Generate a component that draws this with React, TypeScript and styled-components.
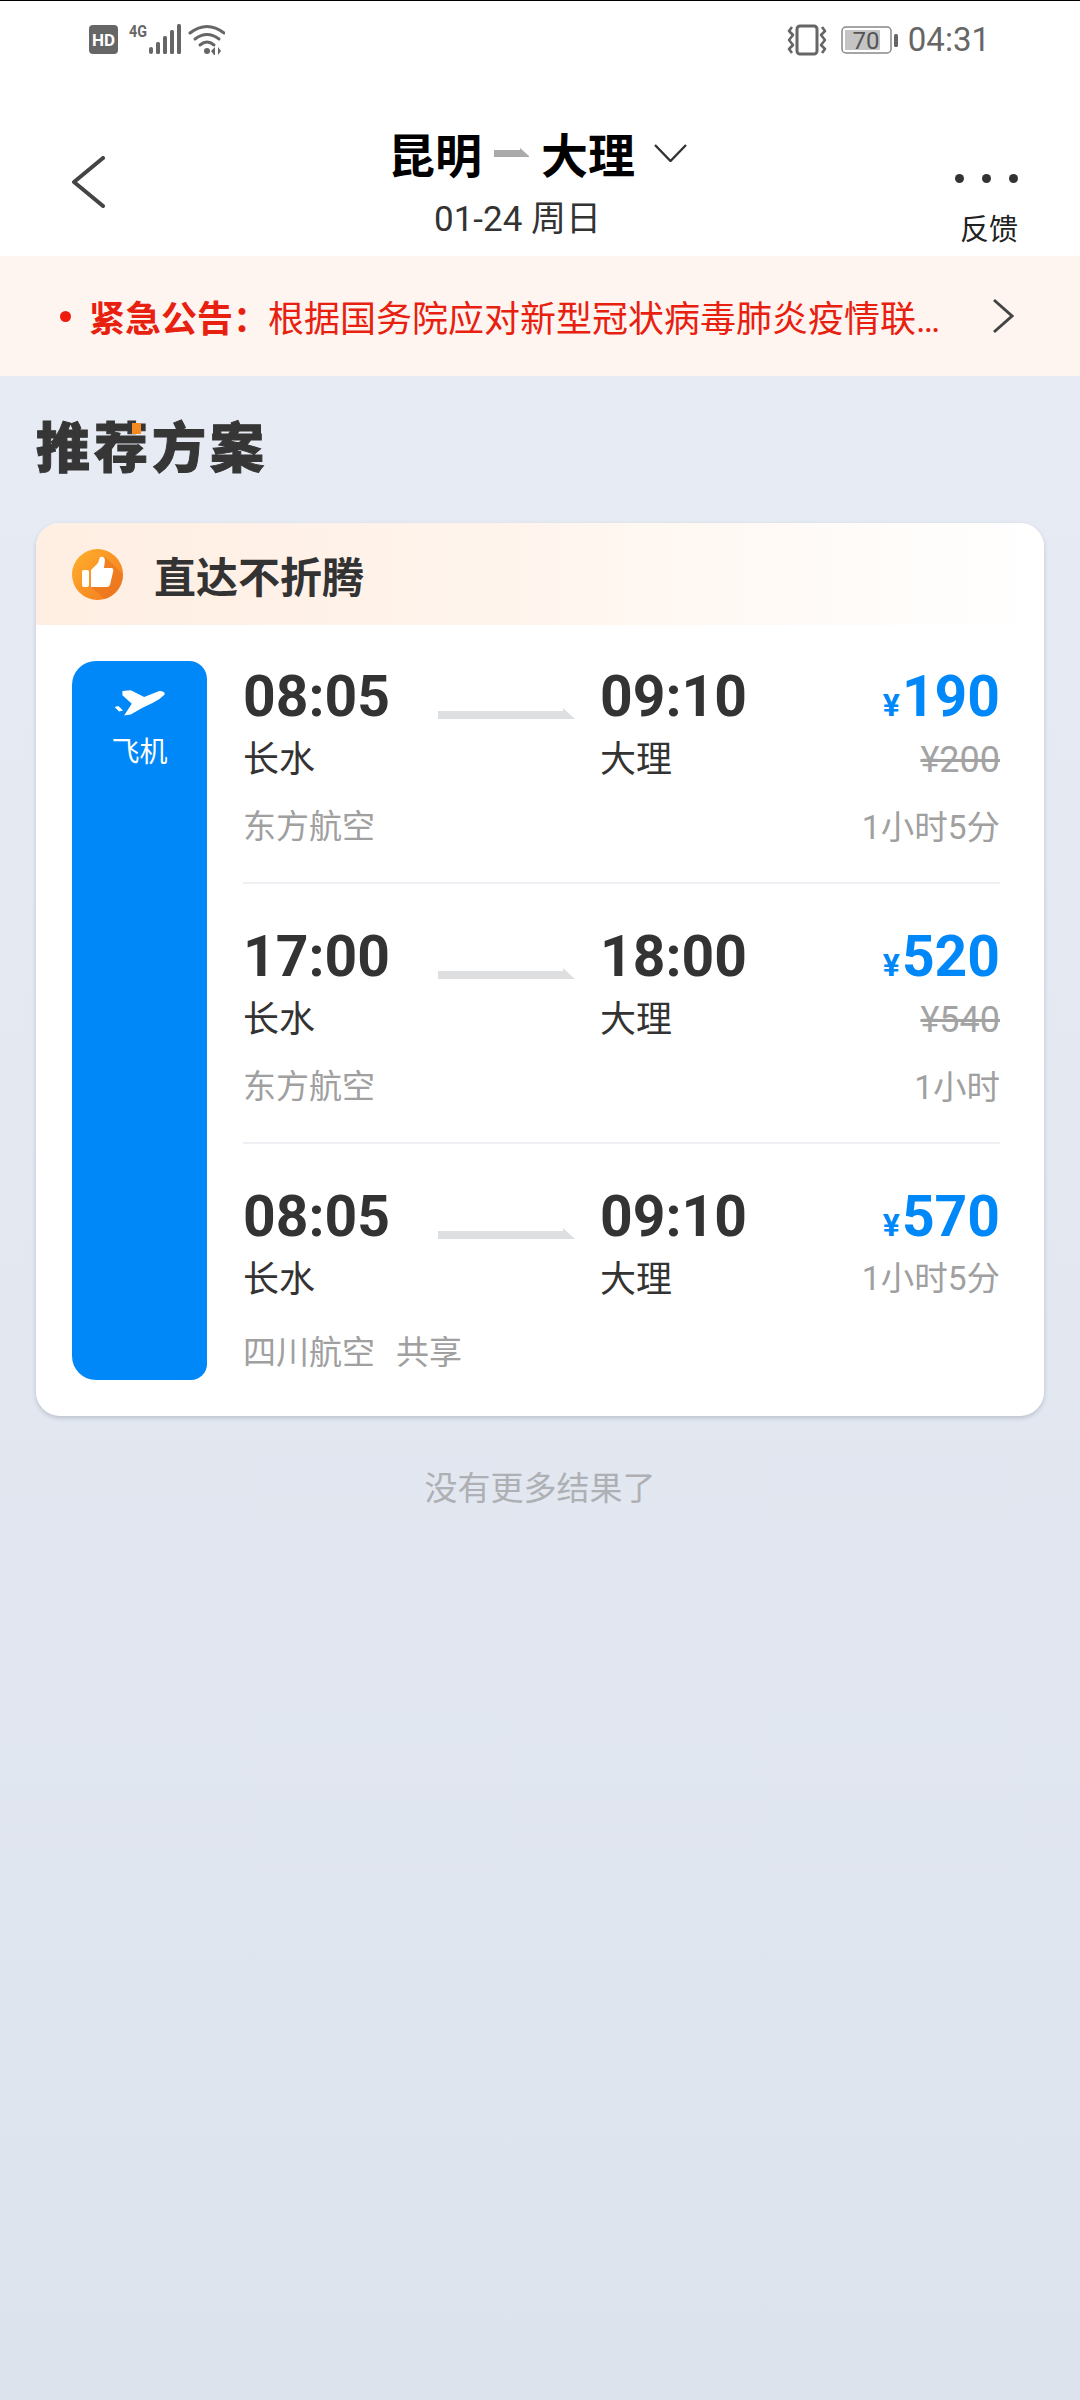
import React from 'react'
import styled, { createGlobalStyle } from 'styled-components'

const GlobalStyle = createGlobalStyle`
  html, body {
    margin: 0;
    padding: 0;
    background: #fff;
  }
  * {
    box-sizing: border-box;
  }
`

const Page = styled.div`
  width: 1080px;
  height: 2400px;
  overflow: hidden;
  display: flex;
  flex-direction: column;
  font-family: Roboto, 'Noto Sans CJK SC', sans-serif;
  background: linear-gradient(180deg, #e9edf5 0%, #dde3ed 100%);
`

const StatusBar = styled.div`
  height: 80px;
  flex: none;
  display: flex;
  align-items: flex-start;
  justify-content: space-between;
  padding: 22px 90px 0 89px;
  background: #fff;
  border-top: 1px solid #000;
`

const StatusGroup = styled.div`
  display: flex;
  align-items: center;
  height: 34px;
`

const Clock = styled.span`
  font-size: 33px;
  line-height: 34px;
  color: #666;
  margin-left: 9px;
`

const Header = styled.header`
  height: 176px;
  flex: none;
  display: flex;
  background: #fff;
`

const BackCol = styled.div`
  width: 120px;
  flex: none;
  padding: 76px 0 0 71px;
`

const CenterCol = styled.div`
  flex: 1;
  display: flex;
  flex-direction: column;
  align-items: center;
  padding-top: 37px;
`

const TitleRow = styled.div`
  position: relative;
  display: flex;
  align-items: center;
  height: 70px;
  gap: 12px;
  margin-right: 9px;
  font-size: 47px;
  font-weight: 700;
  color: #000;
`

const TitleChevron = styled.svg`
  position: absolute;
  left: calc(100% + 19px);
  top: 27px;
`

const DateText = styled.div`
  font-size: 35px;
  line-height: 56px;
  height: 56px;
  margin: 5px 0 0 3px;
  color: #333;
`

const MoreCol = styled.div`
  width: 168px;
  flex: none;
  display: flex;
  flex-direction: column;
  align-items: flex-end;
  padding: 94px 62px 0 0;
`

const Dots = styled.div`
  display: flex;
  gap: 18px;
`

const Dot = styled.span`
  width: 9px;
  height: 9px;
  border-radius: 50%;
  background: #333;
`

const Feedback = styled.div`
  font-size: 29px;
  line-height: 40px;
  margin-top: 27px;
  color: #222;
`

const Notice = styled.div`
  height: 120px;
  flex: none;
  display: flex;
  align-items: center;
  padding-left: 60px;
  background: #fff5f0;
  color: #e8200f;
  font-size: 36px;
`

const NoticeDot = styled.span`
  width: 11px;
  height: 11px;
  flex: none;
  border-radius: 50%;
  background: #ee1c0e;
  margin-right: 18px;
`

const NoticeLabel = styled.span`
  font-weight: 700;
  flex: none;
  width: 179px;
  white-space: nowrap;
`

const NoticeText = styled.span`
  width: 677px;
  flex: none;
  white-space: nowrap;
`

const NoticeArrow = styled.svg`
  margin-left: 47px;
  flex: none;
`

const Section = styled.main`
  padding: 0 36px;
`

const Heading = styled.h2`
  position: relative;
  width: max-content;
  margin: 37px 0 36px 0;
  font-size: 54px;
  line-height: 74px;
  font-weight: 900;
  letter-spacing: 4px;
  color: #363636;
  -webkit-text-stroke: 1px #363636;
`

const HeadingMark = styled.span`
  position: absolute;
  left: 96px;
  top: 10px;
  width: 9px;
  height: 11px;
  background: #f58a1f;
`

const Card = styled.section`
  width: 1008px;
  background: #fff;
  border-radius: 24px;
  overflow: hidden;
  box-shadow: 0 2px 4px rgba(70, 80, 100, 0.25);
`

const CardHeader = styled.div`
  height: 102px;
  display: flex;
  align-items: center;
  padding-left: 36px;
  background: linear-gradient(90deg, #ffeee2 0%, #fff4ec 45%, #ffffff 100%);
`

const CardTitle = styled.span`
  margin-left: 31px;
  font-size: 42px;
  font-weight: 700;
  color: #333;
`

const CardBody = styled.div`
  display: flex;
  padding: 36px 44px 36px 36px;
`

const Transport = styled.div`
  width: 135px;
  flex: none;
  display: flex;
  flex-direction: column;
  align-items: center;
  padding-top: 28px;
  border-radius: 24px 18px 16px 24px;
  background: #0087f8;
  color: #fff;
  font-size: 28px;
`

const TransportLabel = styled.span`
  margin-top: 14px;
  line-height: 44px;
`

const Rows = styled.div`
  flex: 1;
  min-width: 0;
  margin-left: 36px;
`

const Row = styled.div<{ $last?: boolean }>`
  padding-bottom: ${({ $last }) => ($last ? '4px' : '32px')};
  border-bottom: ${({ $last }) => ($last ? 'none' : '2px solid #eef0f4')};
  & + & {
    padding-top: 37px;
  }
`

const Line = styled.div<{ $height: number }>`
  display: flex;
  align-items: center;
  height: ${({ $height }) => $height}px;
`

const Time = styled.span`
  width: 195px;
  flex: none;
  font-size: 57px;
  line-height: 72px;
  font-weight: 700;
  color: #333;
`

const ArriveTime = styled(Time)`
  margin-left: 25px;
`

const RouteArrow = styled.svg`
  width: 137px;
  height: 12px;
  flex: none;
  margin-top: 32px;
`

const Price = styled.span`
  margin-left: auto;
  font-size: 57px;
  line-height: 72px;
  font-weight: 700;
  color: #0087f8;
`

const Yuan = styled.span`
  font-size: 32px;
  line-height: 1;
  margin-right: 2px;
`

const DepartCity = styled.span`
  width: 357px;
  flex: none;
  font-size: 36px;
  line-height: 54px;
  color: #333;
`

const ArriveCity = styled.span`
  font-size: 36px;
  line-height: 54px;
  color: #333;
`

const OldPrice = styled.span`
  margin-left: auto;
  font-size: 36px;
  color: #a3a3a3;
  text-decoration: line-through;
`

const Muted = styled.span`
  font-size: 33px;
  color: #a0a0a0;
`

const Duration = styled.span<{ $raised?: boolean }>`
  margin-left: auto;
  margin-bottom: ${({ $raised }) => ($raised ? '10px' : '0')};
  font-size: 33.5px;
  white-space: nowrap;
  color: #a0a0a0;
`

const MetaLine = styled(Line)<{ $shift?: boolean }>`
  margin-top: ${({ $shift }) => ($shift ? '17px' : '11px')};
`

const Carrier = styled(Muted)`
  margin-right: 21px;
`

const EndText = styled.div`
  margin-top: 49px;
  text-align: center;
  font-size: 33px;
  line-height: 48px;
  color: #aeb0b4;
`

const StatusLeftIcons = () => (
  <svg width="136" height="40" viewBox="0 -4 136 40">
    <rect x="0" y="1" width="29" height="29" rx="4" fill="#666" />
    <text x="14.5" y="21.5" textAnchor="middle" fontFamily="Roboto" fontWeight="700" fontSize="17" fill="#fff">HD</text>
    <text x="40" y="13" fontFamily="Roboto" fontWeight="700" fontSize="17" fill="#666" textLength="18" lengthAdjust="spacingAndGlyphs">4G</text>
    <g fill="#666">
      <rect x="60" y="23" width="4" height="7" rx="2" />
      <rect x="67" y="18" width="4" height="12" rx="1.5" />
      <rect x="74" y="12" width="4" height="18" rx="1.5" />
      <rect x="81" y="6" width="4" height="24" rx="1.5" />
      <rect x="88" y="0" width="4" height="30" rx="1.5" />
    </g>
    <g fill="none" stroke="#666" strokeWidth="3" strokeLinecap="round">
      <path d="M101 9 Q118 -4 135 9" />
      <path d="M106 15 Q118 6 130 15" />
      <path d="M111 21 Q118 15 125 21" />
    </g>
    <circle cx="118" cy="27" r="3" fill="#666" />
    <path d="M126 23v8h-1l-3-4zM129 23v8l3-4z" fill="#666" />
  </svg>
)

const VibrateIcon = () => (
  <svg width="40" height="32" viewBox="0 0 40 32">
    <rect x="10" y="2" width="20" height="28" rx="3" fill="none" stroke="#666" strokeWidth="3" />
    <path d="M5 3 L2 7 L6 11 L2 16 L6 21 L2 25 L5 29" fill="none" stroke="#666" strokeWidth="2.6" strokeLinejoin="round" />
    <path d="M35 3 L38 7 L34 11 L38 16 L34 21 L38 25 L35 29" fill="none" stroke="#666" strokeWidth="2.6" strokeLinejoin="round" />
  </svg>
)

const BatteryIcon = () => (
  <svg width="58" height="30" viewBox="0 0 58 30" style={{ marginLeft: 14 }}>
    <rect x="1" y="2" width="49" height="26" rx="4" fill="#fff" stroke="#888" strokeWidth="1.5" />
    <rect x="4" y="5" width="35" height="20" rx="1" fill="#c4c4c4" />
    <rect x="53" y="9" width="4" height="13" rx="1.5" fill="#666" />
    <text x="25" y="24" textAnchor="middle" fontFamily="Roboto" fontSize="24" fill="#555">70</text>
  </svg>
)

const ThumbBadge = () => (
  <svg width="51" height="51" viewBox="0 0 51 51">
    <defs>
      <linearGradient id="thumbFill" x1="0" y1="0" x2="1" y2="1">
        <stop offset="0" stopColor="#ffb12c" />
        <stop offset="1" stopColor="#f4781f" />
      </linearGradient>
    </defs>
    <circle cx="25.5" cy="25.5" r="25.5" fill="url(#thumbFill)" />
    <path d="M19 38 L33 8 L51 25.5 A25.5 25.5 0 0 1 33 50 Z" fill="#e8701d" opacity="0.55" />
    <rect x="10" y="21" width="7" height="17" rx="2" fill="#fff" />
    <path d="M19 21 L26 14 L28 8 Q32 7 33 11 L32 19 L40 19 Q42 20 41 23 L38 36 Q37 38 35 38 L19 38 Z" fill="#fff" />
  </svg>
)

const PlaneIcon = () => (
  <svg width="52" height="28" viewBox="165 118 155 80">
    <path d="M190 122 L215 120 L255 140 L300 122 Q318 122 316 133 Q300 150 280 158 L250 172 L215 192 L195 195 L218 160 L190 135 Z" fill="#fff" />
    <path d="M167 170 L178 167 L192 180 L180 183 Z" fill="#fff" />
  </svg>
)

type Flight = {
  depart: string
  arrive: string
  price: string
  oldPrice?: string
  carrier: string
  shared?: boolean
  duration: string
}

const flights: Flight[] = [
  { depart: '08:05', arrive: '09:10', price: '190', oldPrice: '¥200', carrier: '东方航空', duration: '1小时5分' },
  { depart: '17:00', arrive: '18:00', price: '520', oldPrice: '¥540', carrier: '东方航空', duration: '1小时' },
  { depart: '08:05', arrive: '09:10', price: '570', carrier: '四川航空', shared: true, duration: '1小时5分' },
]

const App: React.FC = () => {
  return (
    <Page>
      <GlobalStyle />
      <StatusBar>
        <StatusGroup>
          <StatusLeftIcons />
        </StatusGroup>
        <StatusGroup>
          <VibrateIcon />
          <BatteryIcon />
          <Clock>04:31</Clock>
        </StatusGroup>
      </StatusBar>
      <Header>
        <BackCol>
          <svg width="34" height="52" viewBox="0 0 34 52">
            <path d="M32 2 L3 26 L32 50" fill="none" stroke="#444" strokeWidth="4" strokeLinecap="round" strokeLinejoin="round" />
          </svg>
        </BackCol>
        <CenterCol>
          <TitleRow>
            <span>昆明</span>
            <svg width="35" height="9" viewBox="0 0 35 9">
              <path d="M0 2H26V0L35 8V9H0Z" fill="#aaa" />
            </svg>
            <span>大理</span>
            <TitleChevron width="33" height="18" viewBox="0 0 33 18">
              <path d="M1 1 L16.5 17 L32 1" fill="none" stroke="#333" strokeWidth="2.4" />
            </TitleChevron>
          </TitleRow>
          <DateText>01-24 周日</DateText>
        </CenterCol>
        <MoreCol>
          <Dots>
            <Dot />
            <Dot />
            <Dot />
          </Dots>
          <Feedback>反馈</Feedback>
        </MoreCol>
      </Header>
      <Notice>
        <NoticeDot />
        <NoticeLabel>紧急公告：</NoticeLabel>
        <NoticeText>根据国务院应对新型冠状病毒肺炎疫情联…</NoticeText>
        <NoticeArrow width="22" height="36" viewBox="0 0 22 36">
          <path d="M2 2 L20 18 L2 34" fill="none" stroke="#444" strokeWidth="3" />
        </NoticeArrow>
      </Notice>
      <Section>
        <Heading>
          推荐方案
          <HeadingMark />
        </Heading>
        <Card>
          <CardHeader>
            <ThumbBadge />
            <CardTitle>直达不折腾</CardTitle>
          </CardHeader>
          <CardBody>
            <Transport>
              <PlaneIcon />
              <TransportLabel>飞机</TransportLabel>
            </Transport>
            <Rows>
              {flights.map((f, i) => (
                <Row key={i} $last={i === flights.length - 1}>
                  <Line $height={72}>
                    <Time>{f.depart}</Time>
                    <RouteArrow viewBox="0 0 137 12">
                      <path d="M0 4H125V1L137 12H0Z" fill="#dedfe1" />
                    </RouteArrow>
                    <ArriveTime>{f.arrive}</ArriveTime>
                    <Price>
                      <Yuan>¥</Yuan>
                      {f.price}
                    </Price>
                  </Line>
                  <Line $height={54}>
                    <DepartCity>长水</DepartCity>
                    <ArriveCity>大理</ArriveCity>
                    {f.oldPrice ? <OldPrice>{f.oldPrice}</OldPrice> : <Duration $raised>{f.duration}</Duration>}
                  </Line>
                  <MetaLine $height={52} $shift={f.shared}>
                    <Carrier>{f.carrier}</Carrier>
                    {f.shared && <Muted>共享</Muted>}
                    {f.oldPrice && <Duration>{f.duration}</Duration>}
                  </MetaLine>
                </Row>
              ))}
            </Rows>
          </CardBody>
        </Card>
        <EndText>没有更多结果了</EndText>
      </Section>
    </Page>
  )
}

export default App
